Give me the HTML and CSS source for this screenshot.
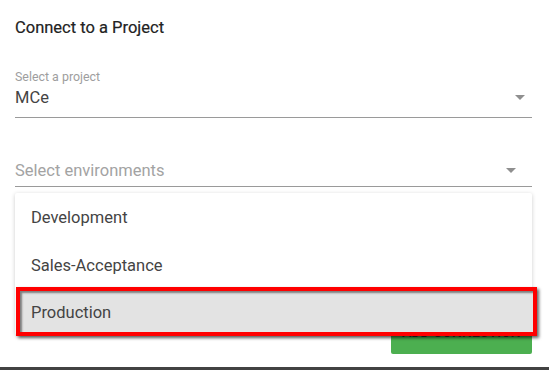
FILE: index.html
```html
<!DOCTYPE html>
<html lang="en">
<head>
  <meta charset="UTF-8" />
  <title>Connect to a Project</title>
  <link rel="stylesheet" href="styles.css">
</head>
<body>
  <div class="dialog">
    <h2 class="dialog-title">Connect to a Project</h2>

    <div class="field field-project">
      <label class="field-label">Select a project</label>
      <div class="field-row">
        <span class="field-value">MCe</span>
        <span class="caret caret-project"></span>
      </div>
    </div>

    <div class="field field-envs">
      <div class="field-row">
        <span class="field-placeholder">Select environments</span>
        <span class="caret caret-envs"></span>
      </div>

      <ul class="menu">
        <li class="menu-item">Development</li>
        <li class="menu-item">Sales-Acceptance</li>
        <li class="menu-item menu-item-marked">Production</li>
      </ul>
    </div>

    <div class="actions">
      <button class="btn-add">ADD CONNECTION</button>
    </div>
  </div>
</body>
</html>
```

FILE: styles.css
```css
body {
  margin: 0;
  padding: 0;
  background: #ffffff;
  font-family: 'Roboto', 'Liberation Sans', sans-serif;
  color: #333;
}

.dialog {
  position: relative;
  box-sizing: border-box;
  width: 549px;
  height: 370px;
  padding: 18px 17px 0 15px;
  border-bottom: 3px solid #424242;
}

.dialog-title {
  margin: 0;
  font-size: 16.5px;
  line-height: 20px;
  font-weight: 400;
  color: #222;
  -webkit-text-stroke: 0.2px #222;
}

.field {
  position: relative;
  border-bottom: 1px solid #9a9a9a;
}

.field-project {
  margin-top: 32px;
  padding-bottom: 10px;
}

.field-label {
  display: block;
  font-size: 12.4px;
  line-height: 14px;
  color: #9e9e9e;
}

.field-row {
  display: flex;
  align-items: center;
  justify-content: space-between;
  height: 20px;
  margin-top: 3px;
}

.field-value {
  font-size: 16.5px;
  color: #444;
}

.field-envs {
  margin-top: 42px;
  padding-bottom: 6px;
}

.field-placeholder {
  font-size: 16.5px;
  color: #a3a3a3;
}

.caret {
  width: 0;
  height: 0;
  border-left: 5px solid transparent;
  border-right: 5px solid transparent;
  border-top: 5px solid #8f8f8f;
}

.caret-project {
  margin-right: 7px;
}

.caret-envs {
  margin-right: 16px;
}

.menu {
  position: absolute;
  top: calc(100% + 7px);
  left: 0;
  right: 0;
  margin: 0;
  padding: 0;
  list-style: none;
  background: #ffffff;
  border-radius: 2px;
  box-shadow: 0 1px 4px rgba(0,0,0,0.2);
  z-index: 2;
}

.menu-item {
  display: flex;
  align-items: center;
  height: 48px;
  padding-left: 16px;
  font-size: 16.5px;
  color: #444;
}

.menu-item-marked {
  box-sizing: border-box;
  height: 49px;
  margin: -2px -5px -1px 1px;
  padding: 2px 0 0 11px;
  background: #e3e3e3;
  border: 4px solid #ff0000;
  box-shadow: 2px 2px 3px rgba(0,0,0,0.6), inset 2px 2px 2px rgba(0,0,0,0.45);
}

.actions {
  display: flex;
  justify-content: flex-end;
  margin-top: 131px;
}

.btn-add {
  width: 141px;
  height: 36px;
  padding: 0 0 9px;
  border: none;
  border-radius: 2px;
  background: #4caf50;
  color: #333;
  font-family: 'Roboto', 'Liberation Sans', sans-serif;
  font-size: 14px;
  font-weight: 500;
}
```
